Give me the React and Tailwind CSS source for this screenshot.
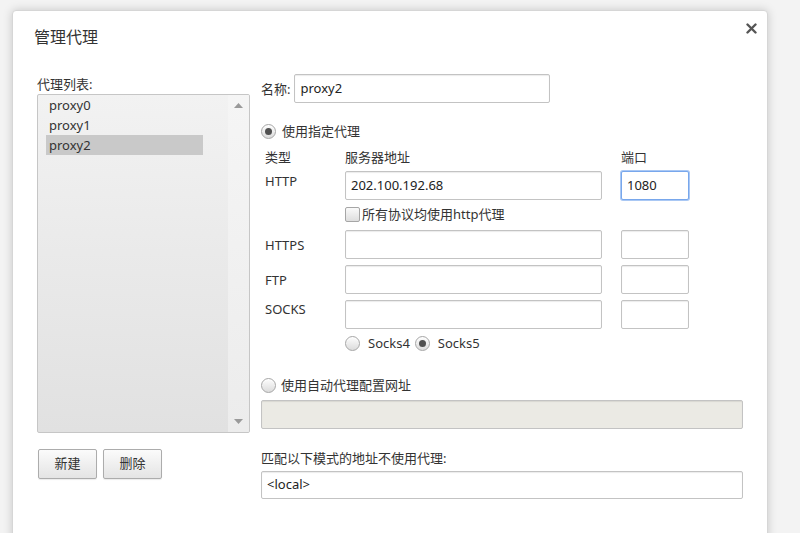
import React from "react";

const font = { fontFamily: '"Noto Sans", "Noto Sans CJK SC", sans-serif' };

function Radio({ checked }) {
  return (
    <span className="inline-flex w-[15px] h-[15px] shrink-0 items-center justify-center rounded-full border border-[#a6a6a6] bg-gradient-to-b from-[#fdfdfd] to-[#dcdcdc] shadow-[inset_0_1px_1px_rgba(255,255,255,0.8)]">
      {checked && <span className="w-[7px] h-[7px] rounded-full bg-[#505050]" />}
    </span>
  );
}

function Checkbox() {
  return (
    <span className="inline-block w-[15px] h-[15px] shrink-0 rounded-[2px] border border-[#a6a6a6] bg-gradient-to-b from-[#fafafa] to-[#dedede]" />
  );
}

function Input({ value, w, h = 29, focus, disabled }) {
  return (
    <div
      className={
        "flex items-center px-[5px] rounded-[2px] text-[13px] text-[#222] " +
        (focus
          ? "border border-[#78a7ec] shadow-[0_0_0_1px_#aac8f4] bg-white "
          : disabled
          ? "border border-[#c3c3c3] shadow-[inset_0_1px_1px_rgba(0,0,0,0.08)] bg-[#ebeae4] "
          : "border border-[#c3c3c3] shadow-[inset_0_1px_1px_rgba(0,0,0,0.08)] bg-white ")
      }
      style={{ width: w, height: h }}
    >
      {value}
    </div>
  );
}

function Button({ children }) {
  return (
    <div className="w-[59px] h-[30px] flex items-center justify-center rounded-[2px] border border-[#acacac] bg-gradient-to-b from-[#fbfbfb] to-[#e4e4e4] text-[13px] text-[#333] shadow-[0_1px_1px_rgba(0,0,0,0.08)]">
      {children}
    </div>
  );
}

export default function App() {
  return (
    <div
      className="w-[800px] h-[533px] overflow-hidden bg-[#f3f3f3] pt-[10px] pl-[12px] text-[#333]"
      style={font}
    >
      <div className="relative w-[756px] h-[560px] bg-white rounded-t-[4px] border border-[#d6d6d6] shadow-[0_0_10px_rgba(0,0,0,0.18)]">
        <svg
          className="absolute left-[733px] top-[12px]"
          width="11"
          height="11"
          viewBox="0 0 11 11"
        >
          <path d="M1.5 1.5 L9.5 9.5 M9.5 1.5 L1.5 9.5" stroke="#555" strokeWidth="2.4" strokeLinecap="round" />
        </svg>
        <div className="pl-[21px] pt-[15px] text-[16px] leading-[22px] text-[#333]">管理代理</div>

        <div className="flex pt-[27px] pl-[24px]">
          {/* left column */}
          <div className="w-[213px] flex flex-col">
            <div className="text-[13px] leading-[19px] h-[19px]">代理列表:</div>
            <div className="relative h-[339px] rounded-[2px] border border-[#c6c6c6] bg-gradient-to-b from-[#f2f2f2] to-[#e1e1e1] flex overflow-hidden">
              <div className="flex-1 pl-[8px]">
                <div className="h-[20px] leading-[20px] pl-[3px] text-[13px] text-[#333]">proxy0</div>
                <div className="h-[20px] leading-[20px] pl-[3px] text-[13px] text-[#333]">proxy1</div>
                <div className="w-[157px] h-[20px] leading-[20px] pl-[3px] text-[13px] text-[#333] bg-[#c9c9c9]">proxy2</div>
              </div>
              <div className="w-[21px] h-full bg-gradient-to-b from-[#f5f5f5] to-[#ececec] flex flex-col items-center justify-between py-[8px]">
                <svg width="9" height="5" viewBox="0 0 9 5"><path d="M0 5 L4.5 0 L9 5 Z" fill="#9a9a9a" /></svg>
                <svg width="9" height="5" viewBox="0 0 9 5"><path d="M0 0 L4.5 5 L9 0 Z" fill="#9a9a9a" /></svg>
              </div>
            </div>
            <div className="flex gap-[6px] mt-[16px] pl-[1px]">
              <Button>新建</Button>
              <Button>删除</Button>
            </div>
          </div>

          {/* right column */}
          <div className="ml-[11px] -mt-[1px] w-[482px] flex flex-col text-[13px]">
            <div className="flex items-center h-[29px]">
              <span className="leading-[18px]">名称:</span>
              <div className="ml-[4px]">
                <Input value="proxy2" w={256} />
              </div>
            </div>

            <div className="flex items-center gap-[6px] h-[18px] mt-[19px]">
              <Radio checked />
              <span className="leading-[18px]">使用指定代理</span>
            </div>

            <div className="grid grid-cols-[80px_276px_68px] pl-[4px] mt-[8px] h-[18px] leading-[18px]">
              <span>类型</span>
              <span>服务器地址</span>
              <span>端口</span>
            </div>

            <div className="grid grid-cols-[80px_276px_68px] pl-[4px] mt-[5px]">
              <span className="leading-[18px] pt-[1px]">HTTP</span>
              <Input value="202.100.192.68" w={257} />
              <Input value="1080" w={68} focus />
            </div>

            <div className="flex items-center gap-[2px] pl-[84px] mt-[5px] h-[18px]">
              <Checkbox />
              <span className="leading-[18px]">所有协议均使用http代理</span>
            </div>

            <div className="grid grid-cols-[80px_276px_68px] items-center pl-[4px] mt-[7px]">
              <span className="leading-[18px]">HTTPS</span>
              <Input value="" w={257} />
              <Input value="" w={68} />
            </div>
            <div className="grid grid-cols-[80px_276px_68px] items-center pl-[4px] mt-[6px]">
              <span className="leading-[18px]">FTP</span>
              <Input value="" w={257} />
              <Input value="" w={68} />
            </div>
            <div className="grid grid-cols-[80px_276px_68px] pl-[4px] mt-[6px]">
              <span className="leading-[18px]">SOCKS</span>
              <Input value="" w={257} />
              <Input value="" w={68} />
            </div>

            <div className="flex items-center pl-[84px] mt-[5px] h-[18px]">
              <Radio />
              <span className="ml-[8px] leading-[18px]">Socks4</span>
              <span className="ml-[5px]"><Radio checked /></span>
              <span className="ml-[8px] leading-[18px]">Socks5</span>
            </div>

            <div className="flex items-center gap-[6px] h-[18px] mt-[24px]">
              <Radio />
              <span className="leading-[18px] -ml-[1px]">使用自动代理配置网址</span>
            </div>
            <div className="mt-[6px]">
              <Input value="" w={482} disabled />
            </div>

            <div className="mt-[20px] h-[18px] leading-[18px]">匹配以下模式的地址不使用代理:</div>
            <div className="mt-[4px]">
              <Input value="<local>" w={482} h={28} />
            </div>
          </div>
        </div>
      </div>
    </div>
  );
}
